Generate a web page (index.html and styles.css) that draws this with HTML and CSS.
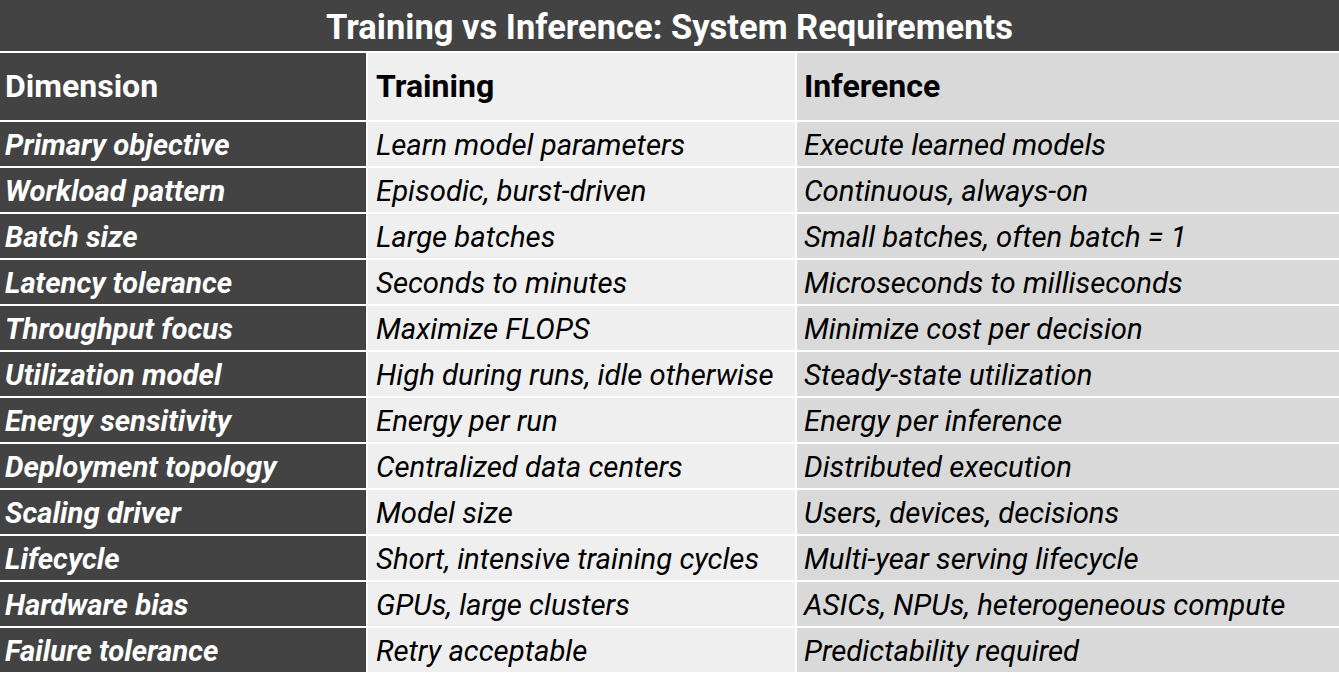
FILE: index.html
```html
<!DOCTYPE html>
<html>
<head>
<meta charset="utf-8">
<link rel="stylesheet" href="styles.css">
</head>
<body>
<div class="sheet">
  <div class="title">Training vs Inference: System Requirements</div>
  <div class="cell dim head">Dimension</div>
  <div class="cell train head">Training</div>
  <div class="cell infer head">Inference</div>

  <div class="cell dim">Primary objective</div>
  <div class="cell train">Learn model parameters</div>
  <div class="cell infer">Execute learned models</div>

  <div class="cell dim">Workload pattern</div>
  <div class="cell train">Episodic, burst-driven</div>
  <div class="cell infer">Continuous, always-on</div>

  <div class="cell dim">Batch size</div>
  <div class="cell train">Large batches</div>
  <div class="cell infer">Small batches, often batch = 1</div>

  <div class="cell dim">Latency tolerance</div>
  <div class="cell train">Seconds to minutes</div>
  <div class="cell infer">Microseconds to milliseconds</div>

  <div class="cell dim">Throughput focus</div>
  <div class="cell train">Maximize FLOPS</div>
  <div class="cell infer">Minimize cost per decision</div>

  <div class="cell dim">Utilization model</div>
  <div class="cell train">High during runs, idle otherwise</div>
  <div class="cell infer">Steady-state utilization</div>

  <div class="cell dim">Energy sensitivity</div>
  <div class="cell train">Energy per run</div>
  <div class="cell infer">Energy per inference</div>

  <div class="cell dim">Deployment topology</div>
  <div class="cell train">Centralized data centers</div>
  <div class="cell infer">Distributed execution</div>

  <div class="cell dim">Scaling driver</div>
  <div class="cell train">Model size</div>
  <div class="cell infer">Users, devices, decisions</div>

  <div class="cell dim">Lifecycle</div>
  <div class="cell train">Short, intensive training cycles</div>
  <div class="cell infer">Multi-year serving lifecycle</div>

  <div class="cell dim">Hardware bias</div>
  <div class="cell train">GPUs, large clusters</div>
  <div class="cell infer">ASICs, NPUs, heterogeneous compute</div>

  <div class="cell dim">Failure tolerance</div>
  <div class="cell train">Retry acceptable</div>
  <div class="cell infer">Predictability required</div>
</div>
</body>
</html>
```
FILE: styles.css
```css
html, body {
  margin: 0;
  padding: 0;
  background: #ffffff;
}
body {
  font-family: Roboto, "Liberation Sans", sans-serif;
  width: 1339px;
  height: 673px;
  overflow: hidden;
}
.sheet {
  display: grid;
  grid-template-columns: 366px 427px 1fr;
  grid-template-rows: 51px 67px repeat(12, 44px);
  row-gap: 2px;
  column-gap: 2px;
  background: #ffffff;
}
.title {
  grid-column: 1 / 4;
  background: #434343;
  color: #ffffff;
  font-weight: 700;
  font-size: 34.5px;
  display: flex;
  align-items: center;
  justify-content: center;
  padding-top: 2px;
}
.cell {
  display: flex;
  align-items: center;
  font-size: 29.3px;
  font-style: italic;
  color: #000000;
  white-space: nowrap;
  overflow: hidden;
  padding-top: 2px;
}
.dim {
  background: #434343;
  color: #ffffff;
  font-weight: 700;
  padding-left: 5px;
}
.train {
  background: #efefef;
  padding-left: 8px;
}
.infer {
  background: #d9d9d9;
  padding-left: 7px;
}
.head {
  font-style: normal;
  font-weight: 700;
  font-size: 32px;
  padding-top: 0;
  padding-bottom: 2px;
}
```
